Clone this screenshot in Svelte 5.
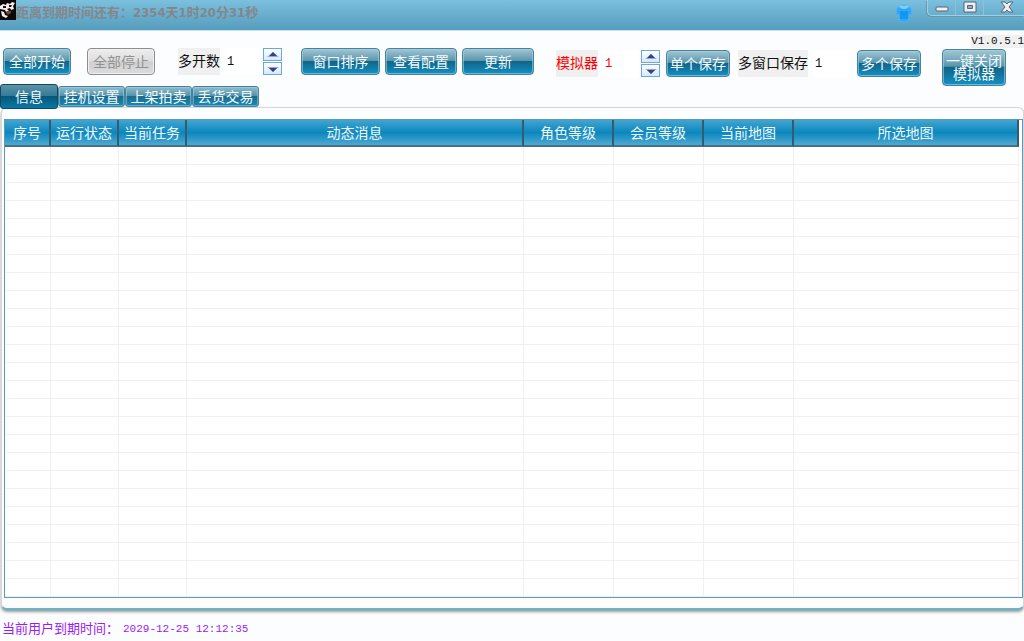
<script>
  let openCount = $state(1);
  let emulator = $state(1);
  let windowCount = $state(1);
  let activeTab = $state('信息');

  const tabs = ['信息', '挂机设置', '上架拍卖', '丢货交易'];

  const columns = [
    { title: '序号', width: 46 },
    { title: '运行状态', width: 68 },
    { title: '当前任务', width: 68 },
    { title: '动态消息', width: 337 },
    { title: '角色等级', width: 90 },
    { title: '会员等级', width: 90 },
    { title: '当前地图', width: 90 },
    { title: '所选地图', width: null }
  ];
</script>

{#snippet spinner(up, down)}
  <div class="spinner">
    <button aria-label="增加" onclick={up}>
      <svg width="12" height="6" viewBox="0 0 12 6"><path d="M6 0 L9 3 L12 5 H0 L3 3 Z" fill="#8fa2ee" /><path d="M6 0 L10 4 H2 Z" fill="#2d4386" /></svg>
    </button>
    <button aria-label="减少" onclick={down}>
      <svg width="12" height="6" viewBox="0 0 12 6"><path d="M0 1 H12 L9 3 L6 6 L3 3 Z" fill="#8fa2ee" /><path d="M2 2 H10 L6 6 Z" fill="#2d4386" /></svg>
    </button>
  </div>
{/snippet}

<div class="window">
  <header class="titlebar">
    <svg class="logo" width="16" height="20" viewBox="0 0 16 20">
      <rect width="16" height="20" fill="#0c0708" />
      <path d="M0 6 L3 4 L6 5 L7 3 L10 4 L12 2 L15 3 L13 6 L14 9 L11 10 L10 8 L7 9 L9 11 L6 12 L5 10 L0 9 Z" fill="#f4eeec" />
      <path d="M1 11 L4 12 L5 15 L8 16 L6 18 L2 16 Z" fill="#f4eeec" />
      <path d="M3 6 L6 6 L6 8 L3 8 Z M9 5 L12 5 L11 7 L9 7 Z" fill="#1a0d0e" />
      <path d="M7 11 L11 11 L11 13 L8 15 L6 13 Z" fill="#7d4141" />
    </svg>
    <h1>距离到期时间还有：2354天1时20分31秒</h1>
    <button class="skin" aria-label="换肤">
      <svg width="18" height="20" viewBox="0 0 18 20">
        <path d="M6 2 H12 L16 5 L17 11 L14 12 V18 Q9 20 4 18 V12 L1 11 L2 5 Z" fill="#35a8f5" stroke="#52b4ee" stroke-width="1" />
        <path d="M6 2 Q9 4 12 2 L14 4 Q9 8 4 4 Z" fill="#7fd0fb" />
        <path d="M5 8 H13 V16 H5 Z" fill="#1297f2" />
      </svg>
    </button>
    <div class="controls">
      <button aria-label="最小化">
        <svg width="14" height="14" viewBox="0 0 14 14"><rect x="1" y="7" width="12" height="4" rx="1" fill="#f0f0f0" stroke="#5d6272" /></svg>
      </button>
      <button aria-label="最大化">
        <svg width="14" height="14" viewBox="0 0 14 14">
          <path d="M1 2 H13 V12 H1 Z M4.500 5.500 V8.500 H9.500 V5.500 Z" fill="#f0f0f0" fill-rule="evenodd" stroke="#5d6272" />
        </svg>
      </button>
      <button class="close" aria-label="关闭">
        <svg width="14" height="14" viewBox="0 0 14 14">
          <path d="M1 2 H5 L7 4 L9 2 H13 L9 7 L13 12 H9 L7 10 L5 12 H1 L5 7 Z" fill="#f0f0f0" stroke="#5d6272" />
        </svg>
      </button>
    </div>
  </header>

  <div class="version"><span>V1.0.5.1</span></div>

  <div class="toolbar">
    <button class="btn medium">全部开始</button>
    <button class="btn medium stop" disabled>全部停止</button>
    <div class="field first">
      <label for="open-count">多开数</label>
      <input id="open-count" type="text" bind:value={openCount} />
      {@render spinner(() => openCount++, () => openCount--)}
    </div>
    <div class="actions">
      <button class="btn wide">窗口排序</button>
      <button class="btn">查看配置</button>
      <button class="btn">更新</button>
    </div>
    <div class="field lowered emulator">
      <label for="emulator">模拟器</label>
      <input id="emulator" type="text" bind:value={emulator} />
      {@render spinner(() => emulator++, () => emulator--)}
      <button class="btn small">单个保存</button>
    </div>
    <div class="field lowered">
      <label for="window-count">多窗口保存</label>
      <input id="window-count" type="text" bind:value={windowCount} />
      <button class="btn small">多个保存</button>
    </div>
    <button class="btn small tall">一键关闭模拟器</button>
  </div>

  <div class="tabs" role="tablist">
    {#each tabs as tab}
      <button role="tab" aria-selected={tab === activeTab} class:active={tab === activeTab} onclick={() => (activeTab = tab)}>{tab}</button>
    {/each}
  </div>

  <main class="panel">
    <div class="grid">
      <table>
        <colgroup>
          {#each columns as col}
            <col style:width={col.width ? `${col.width}px` : null} />
          {/each}
        </colgroup>
        <thead>
          <tr>
            {#each columns as col}
              <th scope="col">{col.title}</th>
            {/each}
          </tr>
        </thead>
        <tbody>
          {#each Array(25) as _}
            <tr>
              {#each columns as _col}
                <td></td>
              {/each}
            </tr>
          {/each}
        </tbody>
      </table>
    </div>
  </main>

  <footer>
    <span>当前用户到期时间：</span>
    <time datetime="2029-12-25T12:12:35">2029-12-25 12:12:35</time>
  </footer>
</div>

<style>
  :global(body) {
    margin: 0;
    background: #fcfdff;
  }

  .window {
    min-height: 100vh;
    box-sizing: border-box;
    overflow: hidden;
    background: #fcfdff;
    font-family: 'Liberation Sans', 'Noto Sans CJK SC', sans-serif;
    font-size: 14px;
    line-height: 16px;
    color: #111;
  }

  button,
  input {
    font: inherit;
    box-sizing: border-box;
    margin: 0;
    padding: 0;
  }

  svg {
    display: block;
  }

  /* Title bar */
  .titlebar {
    display: flex;
    align-items: flex-start;
    box-sizing: border-box;
    height: 31px;
    background: linear-gradient(#7bc0de, #569cbc);
    border-bottom: 1px solid #c4e1ec;
  }

  .logo {
    flex: none;
  }

  h1 {
    flex: 1;
    margin: 0;
    padding-top: 3px;
    font-family: 'DejaVu Sans Condensed', 'Noto Sans CJK SC', sans-serif;
    font-size: 13px;
    line-height: 20px;
    font-weight: bold;
    color: #84868b;
    white-space: nowrap;
  }

  .skin {
    margin: 3px 14px 0 0;
    border: 0;
    background: none;
  }

  .controls {
    display: flex;
    height: 15px;
    border: 1px solid #a1d0e4;
    border-width: 0 0 1px 1px;
    border-bottom-left-radius: 5px;
    box-shadow: -1px 1px 0 #6598ae;
  }

  .controls button {
    display: flex;
    justify-content: center;
    width: 28px;
    border: 0;
    border-right: 1px solid #8cc2d8;
    background: none;
  }

  .controls .close {
    width: 40px;
    padding-left: 6px;
    border-right: 0;
  }

  .version {
    display: flex;
    justify-content: flex-end;
    height: 13px;
    padding-top: 4px;
  }

  .version span {
    background: #f0f0f0;
    font-family: 'Liberation Mono', monospace;
    font-size: 11px;
    line-height: 13px;
    white-space: nowrap;
  }

  /* Toolbar */
  .toolbar {
    display: flex;
    align-items: flex-start;
    padding: 0 18px 0 3px;
    height: 36px;
  }

  .btn {
    width: 72px;
    height: 27px;
    border: 1px solid #4b8299;
    border-radius: 4px;
    background: linear-gradient(#a3c5d2 0%, #5a97ae 46%, #146486 50%, #107aa5 75%, #1691c4 100%);
    box-shadow: inset 0 0 0 1px rgba(150, 215, 237, 0.6);
    color: #f2fbff;
    line-height: 14px;
    white-space: nowrap;
  }

  .btn.medium {
    width: 68px;
  }

  .btn.wide {
    width: 79px;
  }

  .btn.small {
    width: 64px;
  }

  .btn.tall {
    height: 37px;
    margin: 1px 0 0 auto;
    line-height: 13px;
    white-space: normal;
  }

  .btn.stop {
    margin-left: 16px;
    border-color: #8e8e8e;
    background: linear-gradient(#ededed 0%, #dedede 48%, #cfcfcf 52%, #dcdcdc 100%);
    box-shadow: inset 0 0 0 1px #f0f0f0;
    color: #929292;
  }

  .field {
    display: flex;
    margin-left: 8px;
  }

  .field.first {
    margin-left: 23px;
  }

  .field.emulator {
    margin-left: 22px;
    color: #f00;
  }

  .lowered {
    padding-top: 2px;
  }

  .field label {
    background: #f0f0f0;
    line-height: 27px;
    white-space: nowrap;
  }

  .field input {
    width: 36px;
    height: 27px;
    margin: 0 2px 0 5px;
    padding-left: 2px;
    border: 0;
    background: #fff;
    color: inherit;
    font-family: 'Liberation Mono', monospace;
    font-size: 12px;
  }

  .spinner {
    display: flex;
    flex-direction: column;
    justify-content: space-between;
    height: 27px;
  }

  .spinner button {
    display: flex;
    align-items: center;
    justify-content: center;
    width: 19px;
    height: 13px;
    border: 1px solid #6ba8dc;
    background: linear-gradient(#fff, #d6e9f8);
  }

  .field .btn {
    margin-left: 6px;
  }

  .actions {
    display: flex;
    gap: 5px;
    margin-left: 19px;
  }

  /* Tabs */
  .tabs {
    display: flex;
    align-items: flex-start;
    height: 23px;
  }

  .tabs button {
    width: 67px;
    height: 21px;
    margin-top: 2px;
    border: 1px solid #4b8299;
    border-radius: 3px;
    background: linear-gradient(#92bccb 0%, #5393ab 46%, #1c6c8c 50%, #1889b6 100%);
    box-shadow: inset 0 0 0 1px rgba(150, 215, 237, 0.5);
    color: #f2fbff;
    white-space: nowrap;
  }

  .tabs .active {
    position: relative;
    width: 58px;
    height: 25px;
    margin-top: 0;
    border-color: #16485d;
    background: linear-gradient(#5b93a8 0%, #357c97 46%, #075878 50%, #0878a7 100%);
    box-shadow: none;
  }

  /* Grid panel */
  .panel {
    margin: 0 0 0 1px;
    padding: 11px 0 10px 2px;
    border: 1px solid #d5d8da;
    border-bottom: 2px solid #68b4c8;
    border-radius: 6px;
    box-shadow: 0 2px 3px #999;
    background: #fcfdff;
  }

  .grid {
    padding-right: 3px;
    border: 1px solid #5d9ab5;
    background: #fff;
  }

  table {
    width: 100%;
    table-layout: fixed;
    border-collapse: separate;
    border-spacing: 0;
  }

  th {
    height: 27px;
    box-sizing: border-box;
    padding: 0;
    border-right: 2px solid #345c70;
    border-bottom: 2px solid #42738a;
    background: linear-gradient(#42a5d1 0%, #0c87be 50%, #4fa9d1 100%);
    color: #eefaff;
    font-weight: normal;
    line-height: 16px;
  }

  td {
    height: 18px;
    box-sizing: border-box;
    padding: 0;
    border-right: 1px solid #f0f0f0;
    border-bottom: 1px solid #f0f0f0;
  }

  footer {
    display: flex;
    align-items: center;
    gap: 4px;
    padding: 10px 2px 0;
    color: #9a1cf5;
    font-size: 13px;
    line-height: 18px;
  }

  footer time {
    font-family: 'Liberation Mono', monospace;
    font-size: 11px;
  }
</style>
